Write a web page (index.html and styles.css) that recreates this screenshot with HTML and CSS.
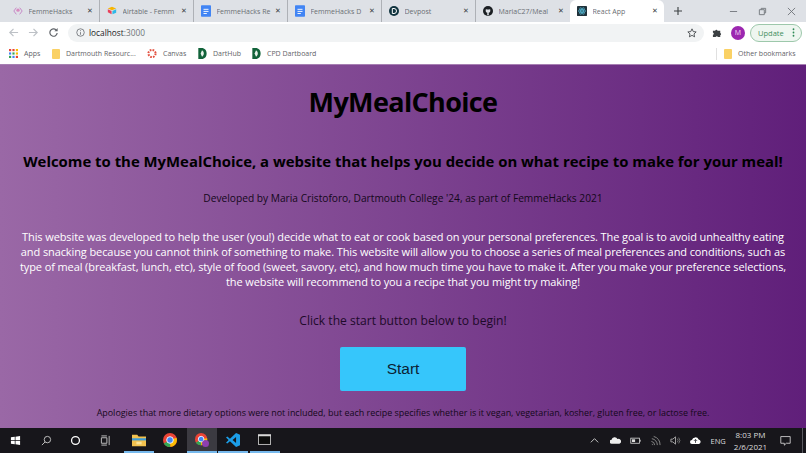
FILE: index.html
```html
<!DOCTYPE html>
<html lang="en">
<head>
<meta charset="utf-8">
<title>React App</title>
<link rel="stylesheet" href="styles.css">
</head>
<body>
<div class="tabstrip">
  <div class="tab"><svg class="fav" viewBox="0 0 12 12"><path d="M4 2 1 6l3 4M8 2l3 4-3 4" fill="none" stroke="#c68ac8" stroke-width="1.2"/><circle cx="6" cy="5" r="2" fill="#d78ac0"/></svg><span class="tab-title">FemmeHacks</span><span class="x">✕</span></div>
  <div class="tab"><svg class="fav" viewBox="0 0 12 12"><path d="M6 1 11 3 6 5 1 3z" fill="#f7b500"/><path d="M6.500 6 11 4v4L6.500 10z" fill="#2db8e8"/><path d="M1 4l4.500 2v4L1 7.500z" fill="#e8405a"/></svg><span class="tab-title">Airtable - Femm</span><span class="x">✕</span></div>
  <div class="tab"><svg class="fav doc" viewBox="0 0 12 14"><rect width="12" height="14" rx="1" fill="#4285f4"/><path d="M3 5h6M3 7.500h6M3 10h4" stroke="#fff" stroke-width="1.100"/></svg><span class="tab-title">FemmeHacks Re</span><span class="x">✕</span></div>
  <div class="tab"><svg class="fav doc" viewBox="0 0 12 14"><rect width="12" height="14" rx="1" fill="#4285f4"/><path d="M3 5h6M3 7.500h6M3 10h4" stroke="#fff" stroke-width="1.100"/></svg><span class="tab-title">FemmeHacks D</span><span class="x">✕</span></div>
  <div class="tab"><svg class="fav" viewBox="0 0 12 12"><circle cx="6" cy="6" r="6" fill="#11343f"/><path d="M4 3h2a3 3 0 0 1 0 6H4z" fill="none" stroke="#fff" stroke-width="1.200"/></svg><span class="tab-title">Devpost</span><span class="x">✕</span></div>
  <div class="tab last"><svg class="fav" viewBox="0 0 12 12"><circle cx="6" cy="6" r="6" fill="#1b1f23"/><path d="M3.500 3.500 4.500 4.200h3l1-.7.300 2.300c0 1.500-1 2.200-2 2.400l.2 2.800H5l.2-2.800c-1-.2-2-.9-2-2.400z" fill="#dee1e6"/></svg><span class="tab-title">MariaC27/Meal</span><span class="x">✕</span></div>
  <div class="tab active"><svg class="fav" viewBox="0 0 12 12"><rect width="12" height="12" rx="1" fill="#20313a"/><g fill="none" stroke="#61dafb" stroke-width=".6"><ellipse cx="6" cy="6" rx="4.500" ry="1.800"/><ellipse cx="6" cy="6" rx="4.500" ry="1.800" transform="rotate(60 6 6)"/><ellipse cx="6" cy="6" rx="4.500" ry="1.800" transform="rotate(120 6 6)"/></g><circle cx="6" cy="6" r="1" fill="#61dafb"/></svg><span class="tab-title">React App</span><span class="x">✕</span></div>
  <div class="newtab"><svg viewBox="0 0 10 10" class="plus"><path d="M5 0v10M0 5h10" stroke="#3c4043" stroke-width="1.400"/></svg></div>
  <div class="winctl">
    <svg viewBox="0 0 10 10"><path d="M1 5h8" stroke="#70757a"/></svg>
    <svg viewBox="0 0 10 10"><path d="M1.500 3h5.500v5.500H1.500zM3.500 3V1.500H8.500V6.500H7" fill="none" stroke="#70757a"/></svg>
    <svg viewBox="0 0 10 10"><path d="M1 1l8 8M9 1 1 9" stroke="#70757a"/></svg>
  </div>
</div>
<div class="toolbar">
  <svg class="nav" viewBox="0 0 12 12"><path d="M11 6H2M6 2 2 6l4 4" fill="none" stroke="#bdc1c6" stroke-width="1.300"/></svg>
  <svg class="nav" viewBox="0 0 12 12"><path d="M1 6h9M6 2l4 4-4 4" fill="none" stroke="#bdc1c6" stroke-width="1.300"/></svg>
  <svg class="nav" viewBox="0 0 12 12"><path d="M10 6.500A4 4 0 1 1 8.800 3.200" fill="none" stroke="#5f6368" stroke-width="1.300"/><path d="M10.500 1v3.500H7z" fill="#5f6368"/></svg>
  <div class="omni">
    <svg class="info" viewBox="0 0 12 12"><circle cx="6" cy="6" r="5" fill="none" stroke="#5f6368"/><path d="M6 5.500V9M6 3v1.200" stroke="#5f6368"/></svg>
    <span class="url"><span class="host">localhost</span>:3000</span>
    <svg class="star" viewBox="0 0 12 12"><path d="M6 1l1.500 3.300 3.500.4-2.600 2.400.7 3.500L6 8.800l-3.100 1.800.7-3.500L1 4.700l3.500-.4z" fill="none" stroke="#3c4043"/></svg>
  </div>
  <svg class="puzzle" viewBox="0 0 12 12"><path d="M1 4h2.500a1.300 1.300 0 0 1 2.500 0H9v2.500a1.300 1.300 0 0 1 0 2.500V11H6.500a1.300 1.300 0 0 0-2.500 0H1V8.500a1.300 1.300 0 0 0 0-2.500z" fill="#3c4043"/></svg>
  <span class="avatar">M</span>
  <span class="update">Update<svg class="dots" viewBox="0 0 3 11"><circle cx="1.500" cy="1.500" r="1.100"/><circle cx="1.500" cy="5.500" r="1.100"/><circle cx="1.500" cy="9.500" r="1.100"/></svg></span>
</div>
<div class="bookmarks">
  <span class="bm apps"><svg class="ic" viewBox="0 0 10 10"><rect width="2.400" height="2.400" fill="#ea4335"/><rect x="3.800" width="2.400" height="2.400" fill="#ea4335"/><rect x="7.600" width="2.400" height="2.400" fill="#fbbc04"/><rect y="3.800" width="2.400" height="2.400" fill="#4285f4"/><rect x="3.800" y="3.800" width="2.400" height="2.400" fill="#34a853"/><rect x="7.600" y="3.800" width="2.400" height="2.400" fill="#fbbc04"/><rect y="7.600" width="2.400" height="2.400" fill="#34a853"/><rect x="3.800" y="7.600" width="2.400" height="2.400" fill="#4285f4"/><rect x="7.600" y="7.600" width="2.400" height="2.400" fill="#ea4335"/></svg>Apps</span>
  <span class="bm res"><span class="folder"></span>Dartmouth Resourc...</span>
  <span class="bm can"><svg class="ic ic-l" viewBox="0 0 12 12"><circle cx="6" cy="6" r="4.300" fill="none" stroke="#e2503f" stroke-width="2.400" stroke-dasharray="2 1.400"/></svg>Canvas</span>
  <span class="bm hub"><svg class="ic ic-l" viewBox="0 0 10 12"><path d="M1 0h3.500C8 0 10 2.500 10 6s-2 6-5.500 6H1z" fill="#12633a"/><path d="M5 2.500 3.500 6 5 9.500C6.500 8.500 7 7 7 6s-.5-2.500-2-3.500" fill="#e8f2ea"/></svg>DartHub</span>
  <span class="bm cpd"><svg class="ic ic-l" viewBox="0 0 10 12"><path d="M1 0h3.500C8 0 10 2.500 10 6s-2 6-5.500 6H1z" fill="#12633a"/><path d="M5 2.500 3.500 6 5 9.500C6.500 8.500 7 7 7 6s-.5-2.500-2-3.500" fill="#e8f2ea"/></svg>CPD Dartboard</span>
  <span class="bm other"><span class="folder"></span>Other bookmarks</span>
</div>
<main class="app">
  <h1>MyMealChoice</h1>
  <h2>Welcome to the MyMealChoice, a website that helps you decide on what recipe to make for your meal!</h2>
  <p class="dev">Developed by Maria Cristoforo, Dartmouth College '24, as part of FemmeHacks 2021</p>
  <p class="about">This website was developed to help the user (you!) decide what to eat or cook based on your personal preferences. The goal is to avoid unhealthy eating and snacking because you cannot think of something to make. This website will allow you to choose a series of meal preferences and conditions, such as type of meal (breakfast, lunch, etc), style of food (sweet, savory, etc), and how much time you have to make it. After you make your preference selections, the website will recommend to you a recipe that you might try making!</p>
  <p class="click">Click the start button below to begin!</p>
  <button class="start" type="button">Start</button>
  <p class="note">Apologies that more dietary options were not included, but each recipe specifies whether is it vegan, vegetarian, kosher, gluten free, or lactose free.</p>
</main>
<footer class="taskbar">
  <svg class="tb win" viewBox="0 0 12 12"><path d="M1 2.500 5.200 2v3.700H1zM6 1.800 11 1v4.700H6zM1 6.500h4.200v3.700L1 9.600zM6 6.500h5V11l-5-.8z" fill="#fff"/></svg>
  <svg class="tb search" viewBox="0 0 12 12"><circle cx="7" cy="5" r="3.500" fill="none" stroke="#c8c8c8"/><path d="M4.500 7.500 1 11" stroke="#c8c8c8"/></svg>
  <svg class="tb cortana" viewBox="0 0 12 12"><circle cx="6" cy="6" r="4.300" fill="none" stroke="#fff" stroke-width="1.400"/></svg>
  <svg class="tb tview" viewBox="0 0 12 12"><path d="M1.500 3h6v6h-6zM1.500 1h6M1.500 11h6M10 1v10" fill="none" stroke="#c8c8c8"/></svg>
  <span class="app-slot used first"><svg class="tb-ic" viewBox="0 0 16 14"><path d="M0 1h6l1.500 2H16v11H0z" fill="#f2c14e"/><rect y="5" width="16" height="2.500" fill="#3d9ad6"/><rect x="5" y="9" width="6" height="3" fill="#fbe39a"/></svg></span>
  <span class="app-slot"><svg class="tb-ic" viewBox="0 0 16 16"><circle cx="8" cy="8" r="8" fill="#ea4335"/><path d="M8 8 1 12a8 8 0 0 0 7.500 4z" fill="#34a853"/><path d="M8 8l7.500-2.500A8 8 0 0 1 8.500 16z" fill="#fbbc04"/><circle cx="8" cy="8" r="3.800" fill="#4285f4" stroke="#fff"/></svg></span>
  <span class="app-slot current used"><svg class="tb-ic" viewBox="0 0 16 16"><circle cx="7" cy="7" r="7" fill="#ea4335"/><path d="M7 7 1 11a7 7 0 0 0 6 3z" fill="#34a853"/><path d="M7 7l7-1a7 7 0 0 1-7 8z" fill="#fbbc04"/><circle cx="7" cy="7" r="3.200" fill="#4285f4" stroke="#fff"/><circle cx="12" cy="12" r="4" fill="#8e3fb0"/></svg></span>
  <span class="app-slot used"><svg class="tb-ic" viewBox="0 0 16 16"><path d="M11.500 0 16 2v12l-4.500 2L4.500 9.500 1.500 12 0 11l3-3-3-3 1.500-1 3 2.500zM11.500 4.500 7.500 8l4 3.500z" fill="#1c9ee8"/></svg></span>
  <span class="app-slot used"><svg class="tb-ic term" viewBox="0 0 16 13"><rect width="16" height="13" fill="#d8d8d8"/><rect x="1" y="2.500" width="14" height="9.500" fill="#0c0c0c"/></svg></span>
  <div class="tray">
    <svg class="tr" viewBox="0 0 12 12"><path d="M2 8l4-4 4 4" fill="none" stroke="#d0d0d0"/></svg>
    <svg class="tr" viewBox="0 0 14 12"><path d="M2 10a2.500 2.500 0 0 1 0-5 4 4 0 0 1 7.500-1A3 3 0 0 1 12 10z" fill="#eee"/></svg>
    <svg class="tr" viewBox="0 0 14 12"><rect x="1" y="3" width="11" height="6.500" fill="none" stroke="#ddd"/><rect x="2.500" y="4.500" width="4" height="3.500" fill="#ddd"/><rect x="12.500" y="5" width="1" height="2.500" fill="#ddd"/></svg>
    <svg class="tr" viewBox="0 0 12 12"><path d="M2 10a1 1 0 0 1 1 1M1.500 7A4 4 0 0 1 5 11M2 4a7 7 0 0 1 6 7M4 1.500A10 10 0 0 1 11 11" fill="none" stroke="#8c8c8c"/></svg>
    <svg class="tr" viewBox="0 0 12 12"><path d="M1 4.500h2L6 2v8L3 7.500H1z" fill="none" stroke="#aaa"/><path d="M8 4a3 3 0 0 1 0 4M9.500 2.800a5 5 0 0 1 0 6.400" fill="none" stroke="#777"/></svg>
    <svg class="tr" viewBox="0 0 14 12"><path d="M2.500 10.500a2.500 2.500 0 0 1 0-5 4.500 4.500 0 0 1 8.500-.8 3 3 0 0 1 .5 5.800z" fill="#fff"/><path d="M7 9V5M5 6.500l2-2 2 2" stroke="#202028" fill="none"/></svg>
    <span class="lang">ENG</span>
    <span class="clock"><span>8:03 PM</span><span>2/6/2021</span></span>
    <svg class="notif" viewBox="0 0 14 14"><path d="M1 2h12v8.500H8L5.500 13v-2.500H1z" fill="none" stroke="#e4e4e4"/></svg>
    <span class="showdesk"></span>
  </div>
</footer>
</body>
</html>
```

FILE: styles.css
```css
* { box-sizing: border-box; }
html, body { margin: 0; height: 100%; }
body {
  width: 806px;
  height: 453px;
  overflow: hidden;
  display: flex;
  flex-direction: column;
  font-family: "Open Sans", "Noto Sans", sans-serif;
  background: #fff;
}
.tabstrip {
  height: 22px;
  flex: none;
  background: #dee1e6;
  display: flex;
  align-items: center;
  padding-left: 6px;
  font-size: 7px;
  color: #6a6e73;
}
.tab {
  width: 94px;
  height: 22px;
  padding-left: 7px;
  padding-right: 4px;
  display: flex;
  align-items: center;
  border-right: 1px solid #aeb1b6;
  white-space: nowrap;
}
.tab.last { border-right: 0; }
.tab-title { flex: 1; min-width: 0; overflow: hidden; margin-left: 5.500px; }
.tab.active {
  background: #fff;
  border-right: 0;
  border-radius: 6px 6px 0 0;
}
.fav { width: 10px; height: 10px; flex: none; }
.fav.doc { width: 10px; height: 12px; }
.x { flex: none; font-size: 7px; color: #3c4043; width: 10px; text-align: center; font-family: "DejaVu Sans", sans-serif; }
.newtab { width: 26px; margin-left: 1px; display: flex; justify-content: center; }
.plus { width: 8px; height: 8px; }
.winctl { margin-left: auto; display: flex; gap: 20px; padding-right: 10px; align-items: center; }
.winctl svg { width: 9px; height: 9px; }
.toolbar {
  height: 21px;
  flex: none;
  background: #fff;
  display: flex;
  align-items: center;
  padding-left: 8px;
}
.nav { width: 11px; height: 11px; margin-right: 9px; flex: none; }
.omni {
  width: 636px;
  height: 18px;
  flex: none;
  background: #f1f3f4;
  border-radius: 9px;
  display: flex;
  align-items: center;
  padding: 0 7px;
  font-size: 8.300px;
  color: #70757a;
}
.info { width: 9px; height: 9px; margin-right: 4px; margin-left: 1px; }
.host { color: #202124; }
.url { flex: 1; }
.star { width: 10px; height: 10px; }
.puzzle { width: 11px; height: 11px; margin-left: 8px; flex: none; }
.avatar {
  width: 14px;
  height: 14px;
  margin-left: 8px;
  border-radius: 50%;
  background: #9c27b0;
  color: #f3dff5;
  font-size: 7px;
  display: flex;
  align-items: center;
  justify-content: center;
  flex: none;
}
.update {
  width: 52px;
  height: 18px;
  margin-left: 5px;
  flex: none;
  border: 1px solid #9dc8ab;
  border-radius: 9px;
  background: #eef6f0;
  color: #3f8f5d;
  font-size: 7.500px;
  display: flex;
  align-items: center;
  padding-left: 7px;
  gap: 8px;
}
.dots { width: 3px; height: 9px; fill: #2e8b57; }
.bookmarks {
  height: 22px;
  flex: none;
  background: #fff;
  display: flex;
  align-items: center;
  padding-left: 9px;
  font-size: 7px;
  color: #5f6368;
  border-bottom: 1px solid #a77fb3;
}
.bm { display: flex; align-items: center; white-space: nowrap; }
.ic { width: 9px; height: 9px; margin-right: 6px; }
.ic-l { width: 10px; height: 11px; margin-right: 6px; }
.folder { width: 8px; height: 10px; background: #fad165; margin-right: 6px; border-radius: 1px; }
.apps { width: 43px; }
.res { width: 95px; }
.can { width: 50px; }
.hub { width: 54px; }
.other { margin-left: auto; width: 90px; padding-left: 7px; border-left: 1px solid #e0e0e0; height: 12px; }
.app {
  flex: 1;
  min-height: 0;
  background: linear-gradient(to right, #9a68a6, #601f7a);
  text-align: center;
  display: flex;
  flex-direction: column;
  align-items: center;
  padding: 0 18px;
  overflow: hidden;
}
h1 { margin: 17px 0 0; font-size: 27px; letter-spacing: -.640px; line-height: 40px; color: #000; font-weight: 700; }
h2 { margin: 28px 0 0; font-size: 14.900px; line-height: 22px; color: #000; font-weight: 700; white-space: nowrap; }
.dev { margin: 18px 0 0; font-size: 10.200px; line-height: 16px; color: #14081a; }
.about { margin: 23px 0 0; font-size: 11px; letter-spacing: -.100px; line-height: 15px; color: #fff; }
.click { margin: 23px 0 0; font-size: 12.100px; line-height: 17px; color: #1e0a2a; }
.start {
  margin-top: 18px;
  width: 126px;
  height: 44px;
  flex: none;
  border: 0;
  border-radius: 2px;
  background: #36c6fb;
  color: #0b2233;
  font-family: "Liberation Sans", Arial, sans-serif;
  font-size: 15.500px;
}
.note { margin: 15px 0 0; font-size: 8.950px; line-height: 13px; color: #14081a; white-space: nowrap; }
.taskbar {
  height: 25px;
  flex: none;
  background: #17161b;
  display: flex;
  align-items: center;
  color: #dcdcdc;
}
.tb { width: 11px; height: 11px; flex: none; }
.win { margin-left: 10px; }
.search { margin-left: 20px; }
.cortana { margin-left: 18px; }
.tview { margin-left: 19px; }
.app-slot {
  width: 30px;
  height: 25px;
  margin-right: 1.500px;
  display: flex;
  align-items: center;
  justify-content: center;
  border-bottom: 2px solid transparent;
  flex: none;
}
.app-slot.first { margin-left: 12.500px; }
.app-slot.used { border-bottom-color: #76b9ed; }
.app-slot.current { background: #3b3a41; }
.tb-ic { width: 14px; height: 14px; }
.tb-ic.term { width: 13px; height: 11px; }
.tray { margin-left: auto; display: flex; align-items: center; height: 25px; }
.tr { width: 11px; height: 11px; margin-right: 9.200px; flex: none; }
.lang { font-size: 7.500px; width: 22px; }
.clock { display: flex; flex-direction: column; align-items: center; font-size: 8px; line-height: 12px; width: 36px; }
.notif { width: 11px; height: 11px; margin-left: 11px; margin-right: 11px; }
.showdesk { width: 2px; height: 25px; border-left: 1px solid #5a5a60; margin-right: 2.500px; }
```
